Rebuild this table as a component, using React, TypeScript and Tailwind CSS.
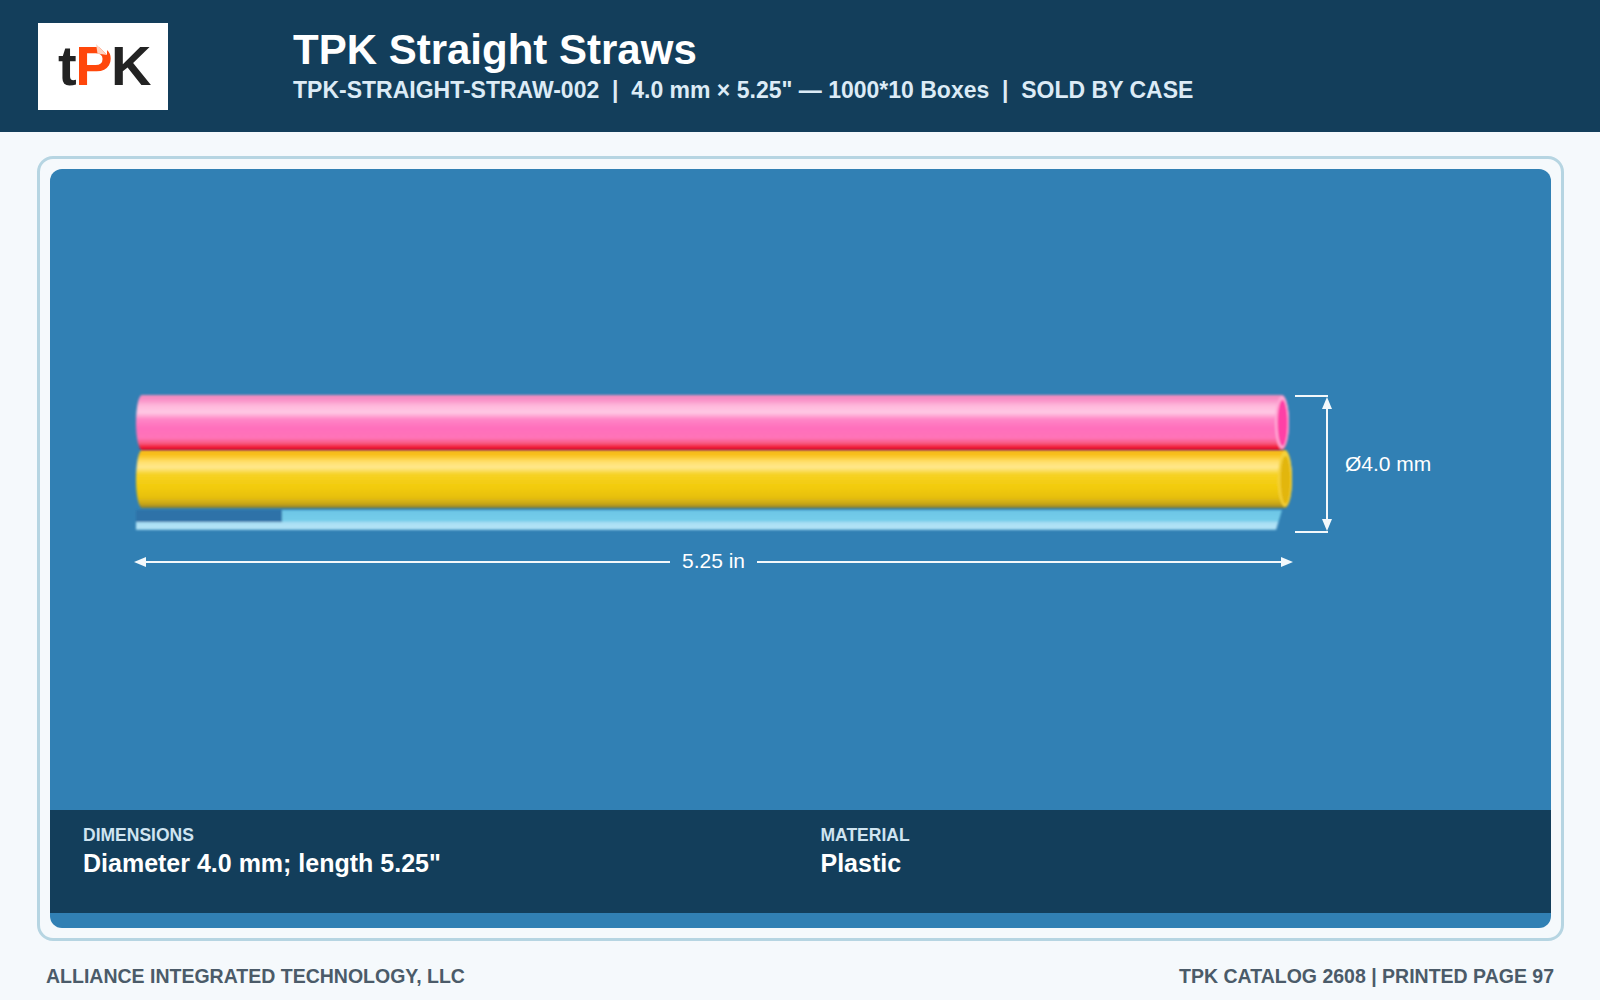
import React from "react";

const font = { fontFamily: '"Liberation Sans", Arial, sans-serif' };

function Straws() {
  return (
    <svg
      width="1502"
      height="641"
      viewBox="0 0 1502 641"
      className="block"
      style={{ fontFamily: '"Liberation Sans", Arial, sans-serif' }}
    >
      <defs>
        <linearGradient id="pinkG" x1="0" y1="0" x2="0" y2="1">
          <stop offset="0" stopColor="#ec8fbd" />
          <stop offset="0.07" stopColor="#f88cc4" />
          <stop offset="0.2" stopColor="#ffb9dc" />
          <stop offset="0.32" stopColor="#ffc8e4" />
          <stop offset="0.44" stopColor="#ff86c6" />
          <stop offset="0.6" stopColor="#ff6fbc" />
          <stop offset="0.78" stopColor="#ff74b8" />
          <stop offset="0.88" stopColor="#f7587f" />
          <stop offset="0.95" stopColor="#f21b33" />
          <stop offset="1" stopColor="#e0061c" />
        </linearGradient>
        <linearGradient id="yelG" x1="0" y1="0" x2="0" y2="1">
          <stop offset="0" stopColor="#f4b51c" />
          <stop offset="0.1" stopColor="#f9c420" />
          <stop offset="0.2" stopColor="#ffdf6a" />
          <stop offset="0.3" stopColor="#ffe88e" />
          <stop offset="0.42" stopColor="#f6d226" />
          <stop offset="0.65" stopColor="#f2cb0a" />
          <stop offset="0.82" stopColor="#e6bf10" />
          <stop offset="0.93" stopColor="#c8a51a" />
          <stop offset="1" stopColor="#8c7f2a" />
        </linearGradient>
        <linearGradient id="blueG" x1="0" y1="0" x2="0" y2="1">
          <stop offset="0" stopColor="#6cc6e6" />
          <stop offset="0.55" stopColor="#76cdea" />
          <stop offset="0.62" stopColor="#a6ddf3" />
          <stop offset="0.9" stopColor="#b6e5f7" />
          <stop offset="1" stopColor="#7ec2e0" />
        </linearGradient>
        <filter id="soft" x="-2%" y="-20%" width="104%" height="140%">
          <feGaussianBlur stdDeviation="0.8" />
        </filter>
      </defs>

      {/* blue strip */}
      <g filter="url(#soft)">
        <path d="M86 341 H1232 L1226 361 H86 Z" fill="url(#blueG)" />
        <rect x="86" y="341" width="146" height="12" fill="#2d72a8" />
      </g>

      {/* yellow straw */}
      <g filter="url(#soft)">
        <path
          d="M92 281 H1235 A7 29 0 0 1 1235 339 H92 A6 29 0 0 1 92 281 Z"
          fill="url(#yelG)"
        />
        <ellipse cx="1235" cy="310" rx="7" ry="28" fill="#f4d23a" />
        <ellipse cx="1235.5" cy="311" rx="5" ry="24" fill="#e2b60a" />
      </g>

      {/* pink straw */}
      <g filter="url(#soft)">
        <path
          d="M92 226 H1232 A7 27.5 0 0 1 1232 281 H92 A6 27.5 0 0 1 92 226 Z"
          fill="url(#pinkG)"
        />
        <ellipse cx="1232" cy="253.5" rx="7" ry="26.5" fill="#ffa9d6" />
        <ellipse cx="1232.5" cy="254" rx="5" ry="23" fill="#ff3fa6" />
      </g>

      {/* horizontal dimension */}
      <g stroke="#f3f8fb" strokeWidth="2" fill="none">
        <line x1="94" y1="393" x2="620" y2="393" />
        <line x1="707" y1="393" x2="1233" y2="393" />
      </g>
      <path d="M84 393 L96 388 L96 398 Z" fill="#f3f8fb" />
      <path d="M1243 393 L1231 388 L1231 398 Z" fill="#f3f8fb" />
      <text
        x="663.5"
        y="399"
        textAnchor="middle"
        fontSize="21"
        fill="#ffffff"
      >
        5.25 in
      </text>

      {/* vertical dimension */}
      <g stroke="#f3f8fb" strokeWidth="2" fill="none">
        <line x1="1245" y1="227" x2="1278" y2="227" />
        <line x1="1245" y1="363" x2="1278" y2="363" />
        <line x1="1277" y1="236" x2="1277" y2="354" />
      </g>
      <path d="M1277 228 L1272 240 L1282 240 Z" fill="#f3f8fb" />
      <path d="M1277 362 L1272 350 L1282 350 Z" fill="#f3f8fb" />
      <text x="1295" y="302" fontSize="21" fill="#ffffff">
        Ø4.0 mm
      </text>
    </svg>
  );
}

function Logo() {
  return (
    <div className="w-[130px] h-[87px] bg-white flex items-center justify-center shrink-0">
      <div
        className="flex items-center leading-none text-[56px] font-bold tracking-[-1.5px] pl-[2px]"
        style={font}
      >
        <span className="text-[#232323]">t</span>
        <span className="relative text-[#ff470b]">
          P
          <svg
            className="absolute top-[6px] right-[4px]"
            width="11"
            height="11"
            viewBox="0 0 11 11"
          >
            <path d="M0 0 H11 V11 Z" fill="#ffffff" />
            <path d="M0 0 L11 11 L1.5 9.5 Z" fill="#ffd2c0" />
          </svg>
        </span>
        <span className="text-[#232323]">K</span>
      </div>
    </div>
  );
}

export default function App() {
  return (
    <div className="w-[1600px] h-[1000px] bg-[#f5f9fc] flex flex-col" style={font}>
      {/* Header */}
      <header className="h-[132px] bg-[#133e5b] flex items-center pl-[38px] shrink-0">
        <Logo />
        <div className="ml-[125px] self-start pt-[27px] flex flex-col">
          <h1 className="text-[42px] leading-[46px] font-bold text-white">
            TPK Straight Straws
          </h1>
          <div className="mt-[4px] text-[23px] leading-[26px] font-bold text-[#dcebf6] whitespace-pre">
            {'TPK-STRAIGHT-STRAW-002  |  4.0 mm × 5.25" — 1000*10 Boxes  |  SOLD BY CASE'}
          </div>
        </div>
      </header>

      {/* Card */}
      <div className="mt-[24px] ml-[37px] mr-[36px] h-[785px] border-[3px] border-[#b6d5e2] rounded-[16px] p-[10px] shrink-0">
        <div className="h-full bg-[#3180b4] rounded-[12px] overflow-hidden flex flex-col">
          <div className="h-[641px] shrink-0">
            <Straws />
          </div>
          <div className="bg-[#133e5b] h-[103px] grid grid-cols-2 gap-x-10 px-[33px] pt-[15px]">
            <div className="flex flex-col">
              <div className="text-[17.5px] leading-[20px] font-bold text-[#cfe4f1]">
                DIMENSIONS
              </div>
              <div className="mt-[3px] text-[25px] leading-[30px] font-bold text-white">
                Diameter 4.0 mm; length 5.25"
              </div>
            </div>
            <div className="flex flex-col">
              <div className="text-[17.5px] leading-[20px] font-bold text-[#cfe4f1]">
                MATERIAL
              </div>
              <div className="mt-[3px] text-[25px] leading-[30px] font-bold text-white">
                Plastic
              </div>
            </div>
          </div>
        </div>
      </div>

      {/* Footer */}
      <footer className="mt-[24px] px-[46px] flex justify-between text-[19.5px] leading-[22px] font-bold text-[#4b5b69]">
        <span>ALLIANCE INTEGRATED TECHNOLOGY, LLC</span>
        <span>TPK CATALOG 2608 | PRINTED PAGE 97</span>
      </footer>
    </div>
  );
}
